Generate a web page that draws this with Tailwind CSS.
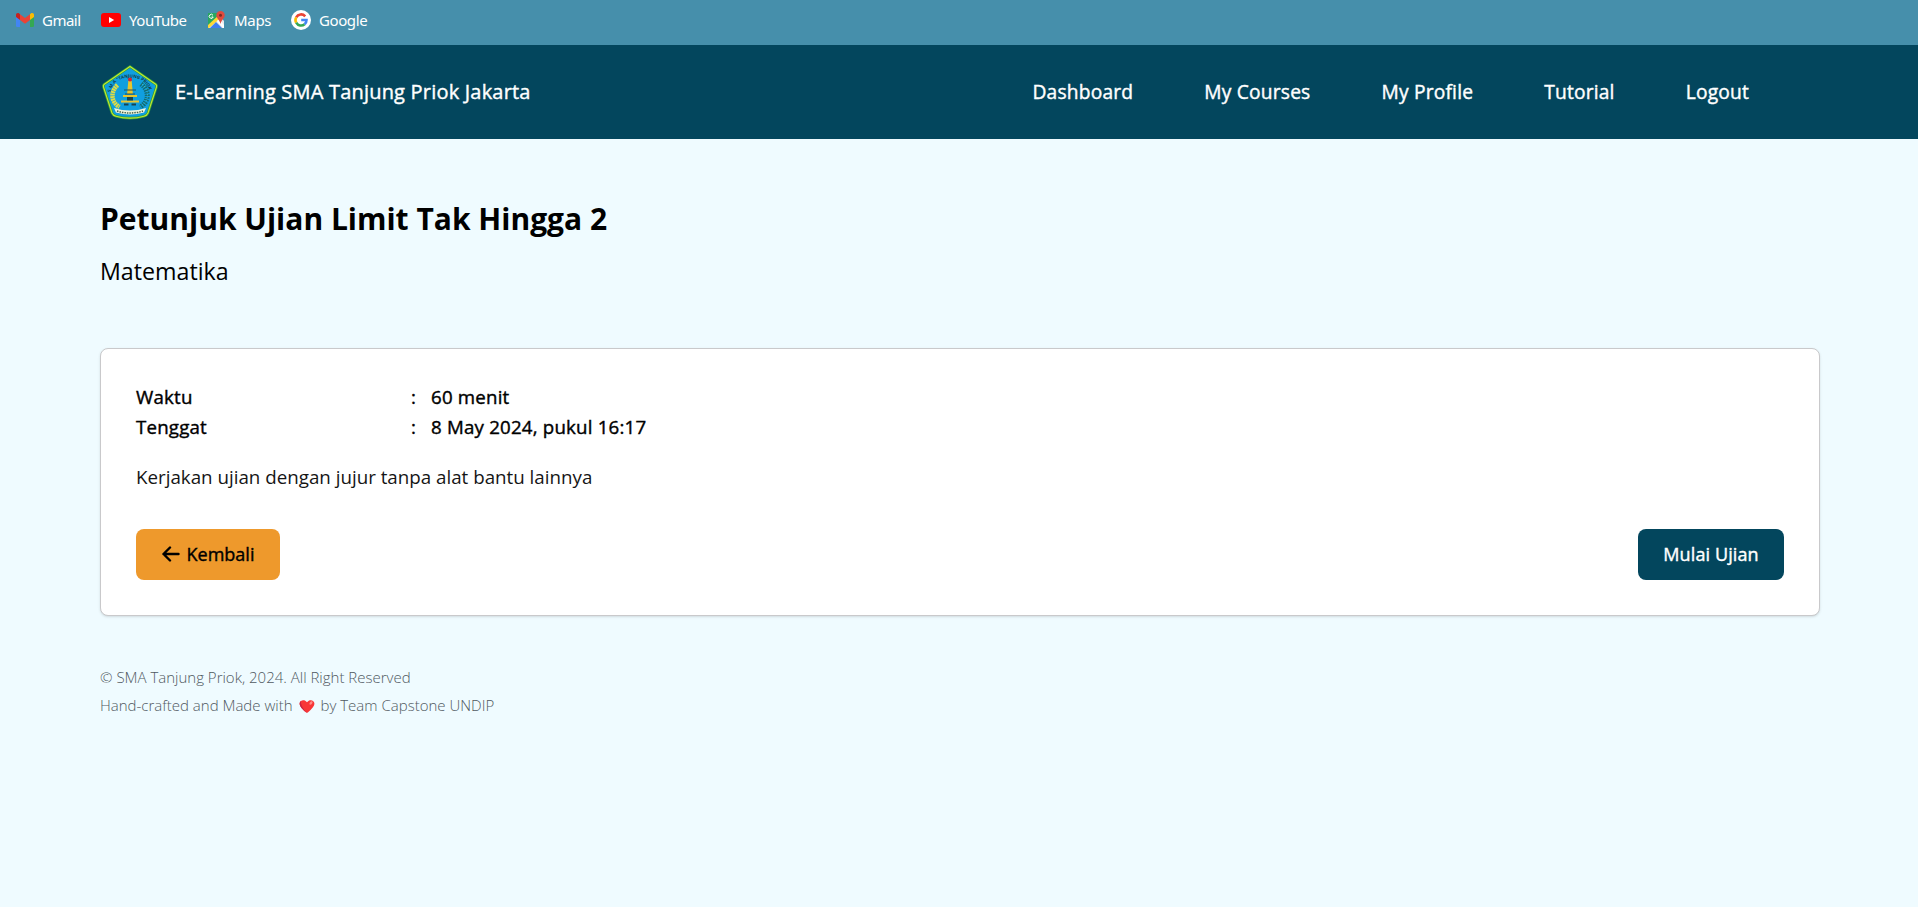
<!DOCTYPE html>
<html lang="id">
<head>
<meta charset="utf-8">
<title>Petunjuk Ujian</title>
<script src="https://cdn.jsdelivr.net/npm/@tailwindcss/browser@4"></script>
</head>
<body class="min-h-screen bg-[#effbff] font-['Open_Sans',sans-serif] text-black">
<!-- Bookmarks bar -->
<div class="flex h-[45px] items-start bg-[#468fab] pl-4 text-[15px] leading-5 text-white font-['Noto_Sans',sans-serif]">
  <a class="flex h-[39px] w-[85px] items-center gap-[8px]">
    <svg class="h-[14px] w-[18px] shrink-0" viewBox="0 0 18 14"><path d="M0 2v10.7Q0 14 1.3 14H4V6z" fill="#4285f4"/><path d="M14 6v8h2.700Q18 14 18 12.700V2z" fill="#34a853"/><path d="M14 1.300V7l4-3V2c0-1.700-1.800-2.500-3.200-1.400z" fill="#fbbc04"/><path d="M4 7V1.300l5 3.700 5-3.700V7l-5 3.800z" fill="#ea4335"/><path d="M0 2v2l4 3V1.300L3.200.6C1.800-.5 0 .3 0 2z" fill="#c5221f"/></svg>
    <span class="tracking-[-0.5px]">Gmail</span></a>
  <a class="flex h-[39px] w-[106px] items-center gap-[8px]">
    <svg class="h-[14px] w-5 shrink-0" viewBox="0 0 20 14"><rect width="20" height="14" rx="3" fill="#f00"/><path d="M8 4l5.200 3L8 10z" fill="#fff"/></svg>
    <span class="tracking-[-0.45px]">YouTube</span></a>
  <a class="flex h-[39px] w-[84px] items-center gap-[9px]">
    <svg class="h-[18px] w-[18px] shrink-0" viewBox="0 0 18 18"><path d="M1 2h11v5L1 17z" fill="#27a862"/><path d="M1 16L13 5l4 5v7H1z" fill="#e8eaed"/><path d="M1 14L13 3l2 3L2 17H1z" fill="#fdd835"/><path d="M3 17l6-6 6 6z" fill="#3f7ff0"/><path d="M10 10l2-2 5 6v3h-1z" fill="#fff"/><path d="M6 4.300A2 2 0 1 0 6.200 6H4.500" fill="none" stroke="#fff"/><path d="M13.500 0a4.200 4.200 0 0 1 4.200 4.300c0 3-3 4-4.200 8.700-1.200-4.700-4.200-5.700-4.200-8.700A4.200 4.200 0 0 1 13.500 0z" fill="#df4b3e"/><circle cx="13.500" cy="4.200" r="1.500" fill="#7d2a23"/></svg>
    <span class="tracking-[-0.3px]">Maps</span></a>
  <a class="flex h-[39px] items-center gap-[8px]">
    <svg class="h-5 w-5 shrink-0" viewBox="0 0 20 20"><circle cx="10" cy="10" r="10" fill="#fff"/><g fill="none" stroke-width="2.600"><path d="M14.200 6.300A5.500 5.500 0 0 0 5.200 7.300" stroke="#ea4335"/><path d="M5.200 7.300a5.500 5.500 0 0 0 0 5.400" stroke="#fbbc05"/><path d="M5.200 12.700a5.500 5.500 0 0 0 8.400 1.500" stroke="#34a853"/><path d="M13.600 14.200A5.400 5.400 0 0 0 15.500 10H10.200" stroke="#4285f4"/></g></svg>
    <span class="tracking-[-0.4px]">Google</span></a>
</div>
<!-- Navigation -->
<header class="flex h-[94px] items-center justify-between bg-[#03465d] pl-[102px] pr-[169px] font-medium text-white [-webkit-text-stroke:0.4px]">
  <div class="flex items-center gap-[17px]">
    <svg class="h-14 w-14 overflow-visible [-webkit-text-stroke:0]" viewBox="0 0 56 56">
      <defs><path id="arc" d="M9 27C12 9 44 9 47 27"/></defs>
      <path d="M28 2.500L54 20.500Q55 21.500 54.500 23L46 49Q45 51.500 42 52.200Q28 56 14 52.200Q11 51.500 10 49L1.500 23Q1 21.500 2 20.500Z" fill="#109fe0" stroke="#2e9f3d" stroke-width="2.600"/>
      <path d="M28 2.500L54 20.500Q55 21.500 54.500 23L46 49Q45 51.500 42 52.200Q28 56 14 52.200Q11 51.500 10 49L1.500 23Q1 21.500 2 20.500Z" fill="none" stroke="#c6e52f" stroke-width="1.100"/>
      <text font-size="4.400" font-weight="700" fill="#123c48" text-anchor="middle"><textPath href="#arc" startOffset="50%">S.M.A "TANJUNG PRIOK"</textPath></text>
      <path d="M15.500 21C8 28 9 38 17.500 43" fill="none" stroke="#e0dc45" stroke-width="4.500" stroke-dasharray="2 .5"/>
      <path d="M39 20c9 7 8 18-1 23" fill="none" stroke="#126c72" stroke-width="5" stroke-dasharray="1.500 1"/>
      <path d="M40 20c8 7 7 17-1 22" fill="none" stroke="#50c4bb" stroke-width="1" stroke-dasharray="1 2"/>
      <path d="M26.300 17h3.400l1.200 13h-5.800z" fill="#e7c52e"/><circle cx="28" cy="15.500" r="2" fill="#d8232f"/>
      <path d="M22 26h12M23 30h10" stroke="#27505d" stroke-width="1"/>
      <path d="M21 31h14v2H21zM19 36.500h18v2H19z" fill="#e7c52e"/>
      <path d="M25 33h6v3.500h-6zM22 39.500h4.500v2H22zm7.500 0H34v2h-4.500z" fill="#174450"/>
      <path d="M12 44Q28 49 44 44L42 48.500Q28 52.500 14 48.500z" fill="#eff5de"/><path d="M15 47q13 4 26 0" fill="none" stroke="#45634a" stroke-width="1.500" stroke-dasharray="1.500 1"/>
    </svg>
    <span class="text-xl tracking-[0.2px]">E-Learning SMA Tanjung Priok Jakarta</span>
  </div>
  <nav class="flex gap-[71px] text-[19.200px] tracking-[0.200px]">
    <a>Dashboard</a><a>My Courses</a><a>My Profile</a><a>Tutorial</a><a>Logout</a>
  </nav>
</header>
<main class="px-[100px] pt-[60px]">
  <h1 class="text-[30px] font-bold leading-10">Petunjuk Ujian Limit Tak Hingga 2</h1>
  <p class="mt-4 text-[23.2px] leading-8">Matematika</p>
  <section class="mt-[61px] h-[268px] w-[1720px] rounded-lg border border-[#c9c9cb] bg-white px-[35px] pt-[33px] shadow-sm">
    <dl class="grid grid-cols-[275px_20px_1fr] text-[18.700px] font-medium leading-[30px] tracking-[0.200px] [-webkit-text-stroke:0.4px]">
      <dt>Waktu</dt><dd>:</dd><dd>60 menit</dd>
      <dt>Tenggat</dt><dd>:</dd><dd>8 May 2024, pukul 16:17</dd>
    </dl>
    <p class="mt-5 text-[18.750px] leading-[30px] text-[#151515]">Kerjakan ujian dengan jujur tanpa alat bantu lainnya</p>
    <div class="mt-[37px] flex justify-between text-lg font-medium [-webkit-text-stroke:0.4px]">
      <button class="flex h-[51px] w-36 items-center justify-center gap-[7px] rounded-lg bg-[#ee992c] pb-[2px]">
        <svg class="h-4 w-[18px]" viewBox="0 0 18 16" fill="none" stroke="#000" stroke-width="2.400" stroke-linecap="round" stroke-linejoin="round"><path d="M8 1.500L1.500 8 8 14.500M1.500 8h15"/></svg>
        <span>Kembali</span></button>
      <button class="h-[51px] w-[146px] rounded-lg bg-[#03465d] pb-[2px] tracking-[0.1px] text-white">Mulai Ujian</button>
    </div>
  </section>
  <footer class="mt-[47px] text-[15px] font-light leading-7 text-[#4f5961]">
    <p>© SMA Tanjung Priok, 2024. All Right Reserved</p>
    <p class="flex items-center">Hand-crafted and Made with
      <svg class="mx-[6px] mt-[2px] h-[15px] w-4" viewBox="0 0 16 15"><path d="M8 14Q1 9 .6 5C.3 1 5.500-.4 8 3.200 10.500-.4 15.700 1 15.400 5 15 9 8 14 8 14z" fill="#f83637"/><path d="M8 14Q1 9 .6 5 .5 3 2 1.800 1 7 8 14z" fill="#cb2440"/><ellipse cx="12" cy="4" rx="1.200" ry="2" transform="rotate(35 12 4)" fill="#ff8b88"/></svg>
      by Team Capstone UNDIP</p>
  </footer>
</main>
</body>
</html>
